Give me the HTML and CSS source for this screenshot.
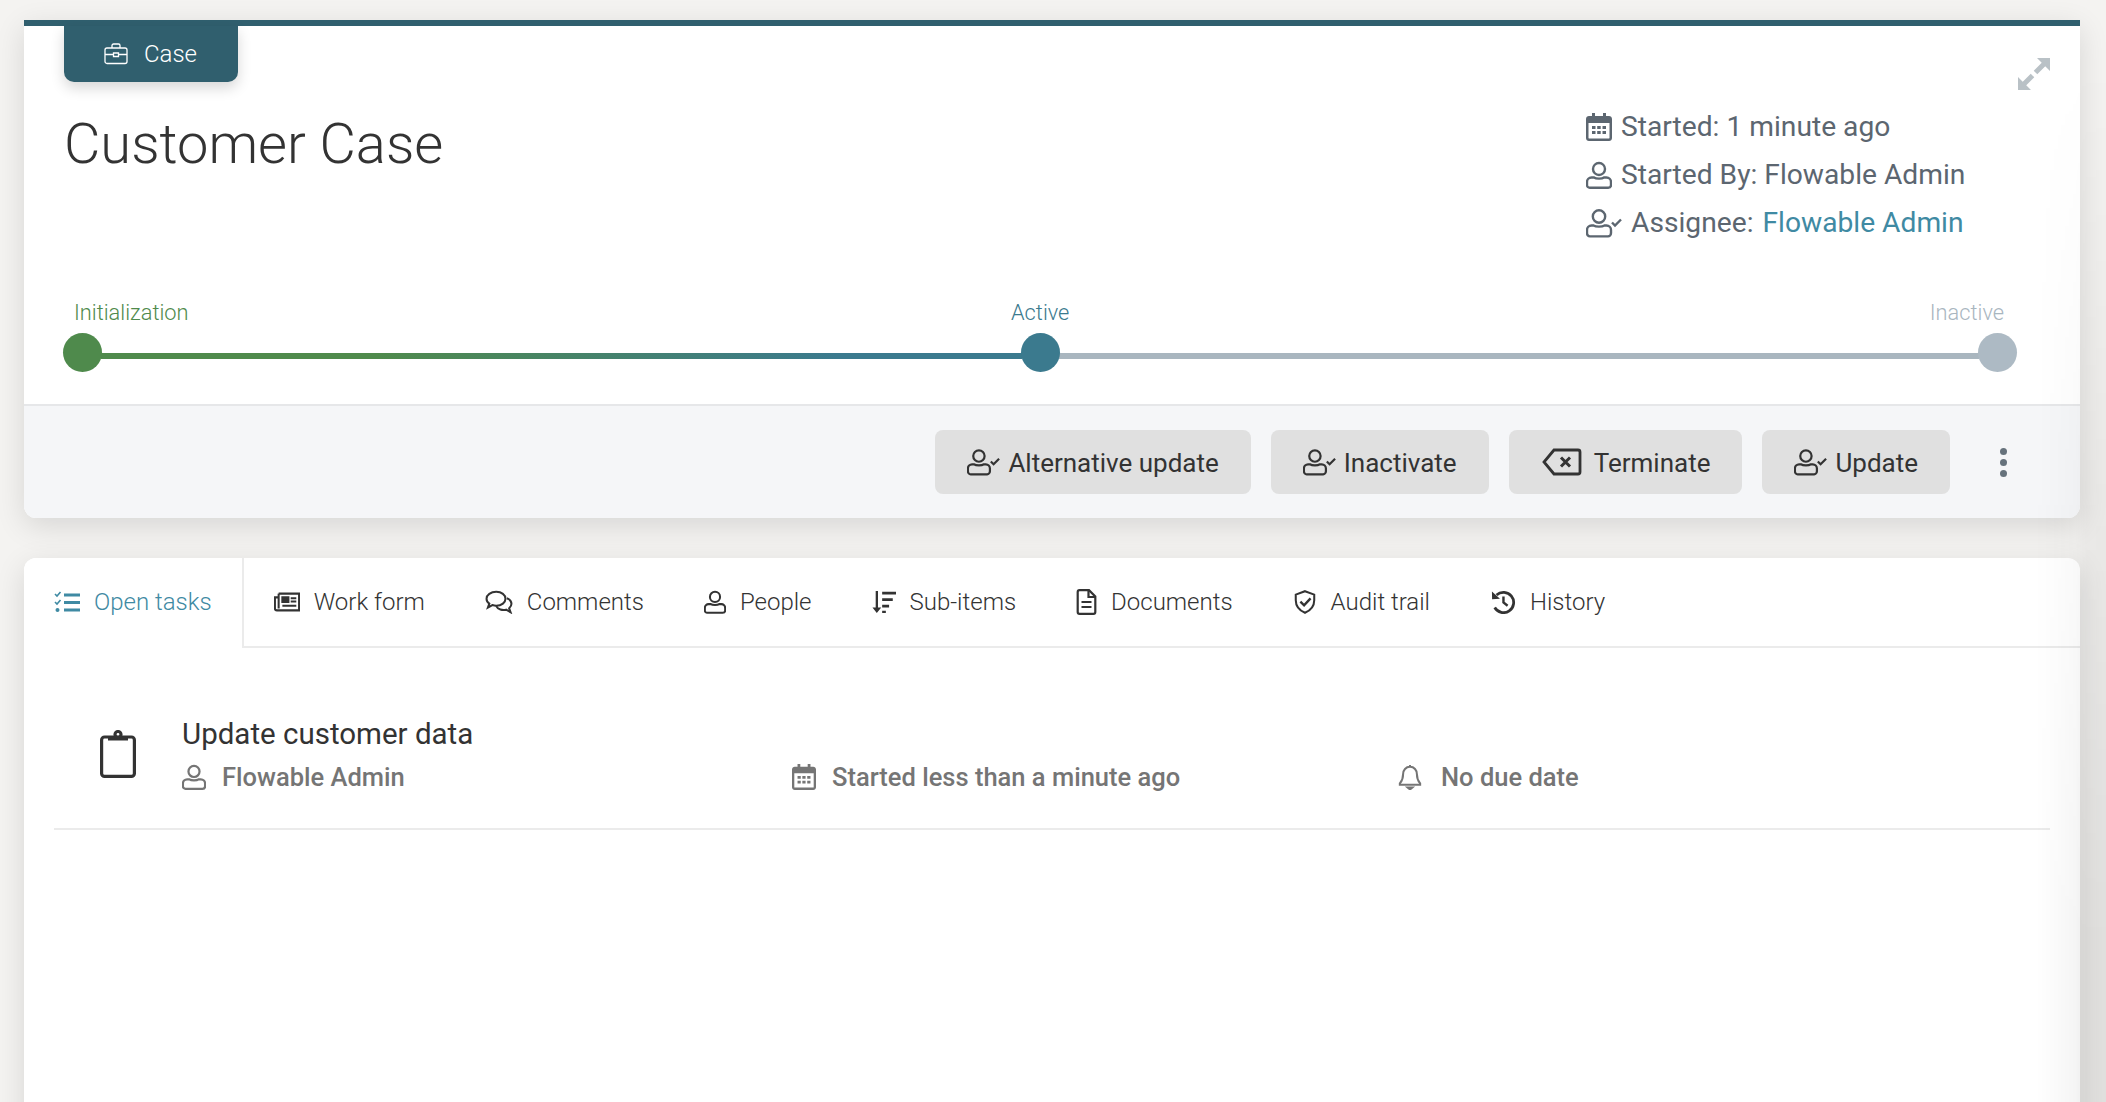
FILE: index.html
```html
<!DOCTYPE html>
<html lang="en">
<head>
<meta charset="utf-8">
<title>Customer Case</title>
<link rel="stylesheet" href="styles.css">
</head>
<body>
<svg class="defs" width="0" height="0" aria-hidden="true">
  <symbol id="i-person" viewBox="0 0 26 28"><g fill="none" stroke="currentColor" stroke-width="2.4"><circle cx="13" cy="8" r="6"/><path d="M8 16.5 C10 18 16 18 18 16.5 H20.5 C23 16.5 25 18.5 25 21 V24 C25 25.6 23.8 26.8 22.2 26.8 H3.8 C2.2 26.8 1 25.6 1 24 V21 C1 18.5 3 16.5 5.5 16.5 Z"/></g></symbol>
  <symbol id="i-assign" viewBox="0 0 36 30"><g fill="none" stroke="currentColor" stroke-width="2.4"><circle cx="13" cy="8.5" r="6.2"/><path d="M7.5 17.5 C10 19 16 19 18.5 17.5 H20.5 C23 17.5 25 19.5 25 22 V25 C25 26.8 23.6 28.4 22 28.4 H4 C2.2 28.4 1 26.8 1 25 V22 C1 19.500 3 17.500 5.500 17.500 Z"/><path d="M26 14.500 L29 17.500 L35 11.500"/></g></symbol>
  <symbol id="i-cal" viewBox="0 0 26 28"><path fill="currentColor" d="M6 0h3v3h8V0h3v3h3c1.700 0 3 1.300 3 3v19c0 1.700-1.300 3-3 3H3c-1.700 0-3-1.300-3-3V6c0-1.700 1.300-3 3-3h3zM2.500 10v15c0 .3.200.500.500.500h20c.3 0 .500-.200.500-.500V10z"/><path fill="currentColor" d="M6 13h3.500v3H6zM11.200 13h3.500v3h-3.500zM16.500 13H20v3h-3.500zM6 18h3.500v3H6zM11.200 18h3.500v3h-3.500zM16.500 18H20v3h-3.500z"/></symbol>
</svg>

<main class="page">
  <section class="card case">
    <div class="tag">
      <svg class="tag-icon" viewBox="0 0 24 22" fill="none" stroke="currentColor" stroke-width="1.300"><rect x="1" y="5" width="22" height="15.500" rx="2"/><path d="M8 5V2.500C8 1.700 8.700 1 9.500 1h5c.8 0 1.500.7 1.500 1.500V5M1 11.500h8.500M14.500 11.500H23M9.500 10h5v3.500h-5z"/></svg>
      <span>Case</span>
    </div>
    <svg class="expand" viewBox="0 0 32 32"><path fill="#b9c1c6" d="M19 0h13v13zM0 19v13h13z"/><path fill="none" stroke="#b9c1c6" stroke-width="5" d="M27 5l-9.500 9.500M14.500 17.500L5 27"/></svg>
    <div class="head">
      <h1 class="title">Customer Case</h1>
      <ul class="facts">
        <li class="fact"><svg class="fact-icon"><use href="#i-cal"/></svg><span>Started: 1 minute ago</span></li>
        <li class="fact"><svg class="fact-icon"><use href="#i-person"/></svg><span>Started By: Flowable Admin</span></li>
        <li class="fact"><svg class="fact-icon wide"><use href="#i-assign"/></svg><span>Assignee: <a class="link">Flowable Admin</a></span></li>
      </ul>
    </div>
    <div class="stages">
      <span class="stage-label l-init">Initialization</span>
      <span class="stage-label l-active">Active</span>
      <span class="stage-label l-inactive">Inactive</span>
      <div class="track">
        <span class="dot d-init"></span>
        <span class="seg seg-done"></span>
        <span class="dot d-active"></span>
        <span class="seg seg-todo"></span>
        <span class="dot d-inactive"></span>
      </div>
    </div>
    <div class="actions">
      <button class="btn"><svg class="btn-icon"><use href="#i-assign"/></svg>Alternative update</button>
      <button class="btn"><svg class="btn-icon"><use href="#i-assign"/></svg>Inactivate</button>
      <button class="btn btn-term"><svg class="btn-icon term" viewBox="0 0 40 28" fill="none" stroke="currentColor" stroke-width="2.800"><path d="M12 2h24c1.200 0 2 .8 2 2v20c0 1.200-.8 2-2 2H12L2 14z"/><path d="M19 9.500l9 9M28 9.500l-9 9" stroke-width="3"/></svg>Terminate</button>
      <button class="btn"><svg class="btn-icon"><use href="#i-assign"/></svg>Update</button>
      <div class="more"><i></i><i></i><i></i></div>
    </div>
  </section>

  <section class="card detail">
    <nav class="tabs">
      <a class="tab active"><svg class="tab-icon" viewBox="0 0 26 22" fill="none" stroke="currentColor"><path d="M1 3l2 2 3.500-4M1 11l2 2 3.500-4" stroke-width="1.600"/><circle cx="3.500" cy="19" r="2" fill="currentColor" stroke="none"/><path d="M10 4h16M10 11.500h16M10 19h16" stroke-width="3"/></svg>Open tasks</a>
      <a class="tab"><svg class="tab-icon" viewBox="0 0 28 22" fill="none" stroke="currentColor" stroke-width="2.200"><path d="M5 2h22v18H3c-1.200 0-2-.8-2-2V6h4"/><path d="M5 2v16" /><path d="M9 6h6.500v5H9z" fill="currentColor"/><path d="M18 7h6M18 10.500h6M9 15h15" /></svg>Work form</a>
      <a class="tab tab-wide"><svg class="tab-icon" viewBox="0 0 30 26" fill="none" stroke="currentColor" stroke-width="2.200"><path d="M12 2c6 0 10 3.500 10 7.500S18 17 12 17c-1.500 0-3-.3-4.200-.7L3 19l1.500-4.200C2.500 13.500 1.500 11.500 1.500 9.500 1.500 5.500 6 2 12 2z"/><path d="M23.500 9c3 1 5 3.500 5 6 0 2-1 3.500-2.500 4.800L27.500 24l-4.800-2.700c-4 1-9-.2-10.700-3.800"/></svg>Comments</a>
      <a class="tab"><svg class="tab-icon person"><use href="#i-person"/></svg>People</a>
      <a class="tab tab-narrow"><svg class="tab-icon" viewBox="0 0 26 26" fill="currentColor"><path d="M4 1h2.500v18H10l-4.800 6L.5 19H4z"/><path d="M11 2h15v3H11zM11 9h11.500v3H11zM11 16h7.500v3H11zM11 22.500h4V25h-4z"/></svg>Sub-items</a>
      <a class="tab"><svg class="tab-icon doc" viewBox="0 0 20 26" fill="none" stroke="currentColor" stroke-width="2.200"><path d="M3 1.200h9.500l6.300 6.300V23c0 1-.8 1.800-1.800 1.800H3c-1 0-1.800-.8-1.800-1.800V3c0-1 .8-1.800 1.800-1.800z"/><path d="M12 1.500V8h6.500M5 13h10M5 18h10"/></svg>Documents</a>
      <a class="tab tab-narrow"><svg class="tab-icon" viewBox="0 0 24 26" fill="none" stroke="currentColor" stroke-width="2.200"><path d="M12 1.300l10 3.700v6c0 6.500-4 11-10 13.700C6 22 2 17.500 2 11V5z"/><path d="M7 12.500l4 4 7-7.500" stroke-width="2.600"/></svg>Audit trail</a>
      <a class="tab"><svg class="tab-icon" viewBox="0 0 26 26" fill="none" stroke="currentColor" stroke-width="3"><path d="M6 5.500A11 11 0 1 1 4 19"/><path d="M1 1.500l.2 8.500 8.500-.5z" fill="currentColor" stroke="none"/><path d="M13.500 7v6.500l4.500 3.500" stroke-width="2.600"/></svg>History</a>
    </nav>
    <div class="task">
      <svg class="task-icon" viewBox="0 0 36 48" fill="none" stroke="currentColor" stroke-width="3.200"><rect x="1.600" y="7" width="32.800" height="39.400" rx="3"/><path d="M8 8.500h20" stroke-width="4"/><circle cx="18" cy="4.500" r="3"/></svg>
      <div class="task-body">
        <div class="task-title">Update customer data</div>
        <div class="task-meta">
          <div class="meta"><svg class="meta-icon"><use href="#i-person"/></svg><span>Flowable Admin</span></div>
          <div class="meta"><svg class="meta-icon"><use href="#i-cal"/></svg><span>Started less than a minute ago</span></div>
          <div class="meta meta-due"><svg class="meta-icon" viewBox="0 0 26 28" fill="none" stroke="currentColor" stroke-width="2.200"><path d="M13 3c-4.500 0-7.500 3.500-7.500 8 0 6-2 8-3.500 10v1.500h22V21c-1.500-2-3.500-4-3.500-10 0-4.500-3-8-7.500-8zM13 1v2"/><path d="M10.500 25.500h5L13 27.500z" fill="currentColor"/></svg><span>No due date</span></div>
        </div>
      </div>
    </div>
  </section>
</main>
<div class="edge-shade"></div>
</body>
</html>
```

FILE: styles.css
```css
* { box-sizing: border-box; }
html, body { margin: 0; height: 100%; overflow: hidden; background: #f4f3f1; }
body { font-family: Roboto, "Liberation Sans", sans-serif; color: #333; }
.defs { position: absolute; }

.page { padding: 20px 26px 0 24px; display: flex; flex-direction: column; gap: 40px; }

.card { background: #fff; border-radius: 12px; box-shadow: 0 8px 30px rgba(0, 0, 0, .12); position: relative; }

.case { border-top: 6px solid #305f6e; border-radius: 0 0 12px 12px; height: 498px; display: flex; flex-direction: column; }

.tag { position: absolute; left: 40px; top: 0; width: 174px; height: 56px; background: #305f6e; color: #fff; border-radius: 0 0 10px 10px; box-shadow: 0 6px 14px rgba(0, 0, 0, .16); display: flex; align-items: center; gap: 16px; padding-left: 40px; font-size: 24px; font-weight: 300; }
.tag-icon { width: 24px; height: 22px; }
.expand { position: absolute; right: 30px; top: 32px; width: 32px; height: 32px; }

.head { display: flex; justify-content: space-between; height: 252px; padding: 0 147px 0 40px; }
.title { margin: 0; padding-top: 84px; font-size: 56px; line-height: 68px; font-weight: 300; color: #333; }
.facts { list-style: none; margin: 0; padding: 77px 0 0; width: 347px; color: #5c6670; font-size: 28.2px; line-height: 48px; }
.fact { display: flex; align-items: center; gap: 9px; height: 48px; white-space: nowrap; }
.fact-icon { width: 26px; height: 28px; color: #5c6670; flex: none; }
.fact-icon.wide { width: 36px; height: 30px; }
.link { color: #3f8aa3; margin-left: 2px; }

.stages { position: relative; height: 126px; }
.stage-label { position: absolute; top: 21px; font-size: 21.8px; line-height: 28px; font-weight: 300; }
.l-init { left: 50px; color: #4f8a4c; }
.l-active { left: 987px; color: #3b7a8e; }
.l-inactive { right: 76px; color: #a9b6bf; }
.track { position: absolute; left: 39px; top: 55px; width: 1954px; height: 39px; display: flex; align-items: center; }
.dot { width: 39px; height: 39px; border-radius: 50%; flex: none; position: relative; z-index: 1; }
.d-init { background: #4f8a4c; }
.d-active { background: #3b7a8e; }
.d-inactive { background: #adbac4; }
.seg { flex: 1; height: 6px; margin: 6px -1px 0; }
.seg-done { background: linear-gradient(90deg, #4f8a4c 30%, #3b7a8e 80%); }
.seg-todo { background: #a9b6bf; }

.actions { flex: 1; border-top: 2px solid #e6e7e9; background: #f5f6f8; border-radius: 0 0 12px 12px; display: flex; justify-content: flex-end; align-items: center; gap: 20px; padding: 0 67px 0 0; }
.btn { height: 64px; border: 0; border-radius: 8px; background: #e0e0e0; color: #333; font: 400 26px Roboto, sans-serif; display: flex; align-items: center; gap: 8px; padding: 2px 32px 0; white-space: nowrap; }
.btn-term { gap: 12px; padding-left: 33px; }
.btn-icon { width: 33px; height: 28px; color: #333; margin-top: -2px; }
.btn-icon.term { width: 40px; height: 28px; }
.more { display: flex; flex-direction: column; gap: 4px; margin-left: 23px; width: 20px; align-items: center; }
.more i { width: 7px; height: 7px; border-radius: 50%; background: #66727c; }

.detail { min-height: 700px; }
.tabs { display: flex; height: 90px; border-bottom: 2px solid #ebebeb; }
.tab { display: flex; align-items: center; gap: 14px; padding: 0 30px; font-size: 24px; font-weight: 300; color: #333; white-space: nowrap; height: 88px; }
.tab.active { color: #3f8aa3; height: 90px; padding-bottom: 3px; background: #fff; border-right: 2px solid #ebebeb; border-radius: 12px 0 0 0; }
.tab-icon { width: 26px; height: 24px; flex: none; }
.tab-wide .tab-icon { width: 28px; }
.tab-narrow .tab-icon { width: 24px; }
.tab-icon.person { width: 22px; height: 26px; }
.tab-icon.doc { width: 21px; height: 26px; }

.task { margin: 0 30px; height: 182px; border-bottom: 2px solid #ebebeb; display: flex; padding: 82px 0 0 46px; gap: 46px; }
.task-icon { width: 36px; height: 48px; color: #333; flex: none; }
.task-body { flex: 1; margin-top: -18px; }
.task-title { font-size: 29.5px; line-height: 44px; color: #333; }
.task-meta { display: grid; grid-template-columns: 610px 606px 1fr; color: #757575; font-size: 25.5px; font-weight: 500; margin-top: -1px; }
.meta { display: flex; align-items: center; gap: 16px; height: 44px; }
.meta-due { gap: 19px; }
.meta-icon { width: 24px; height: 26px; flex: none; }

.edge-shade { position: fixed; top: 0; right: 0; bottom: 0; width: 70px; pointer-events: none; background: linear-gradient(to right, rgba(0, 0, 0, 0), rgba(0, 0, 0, .04) 56%, rgba(0, 0, 0, .075) 72%, rgba(0, 0, 0, .08)); -webkit-mask-image: linear-gradient(to bottom, transparent 60px, #000 950px); mask-image: linear-gradient(to bottom, transparent 60px, #000 950px); }
```
